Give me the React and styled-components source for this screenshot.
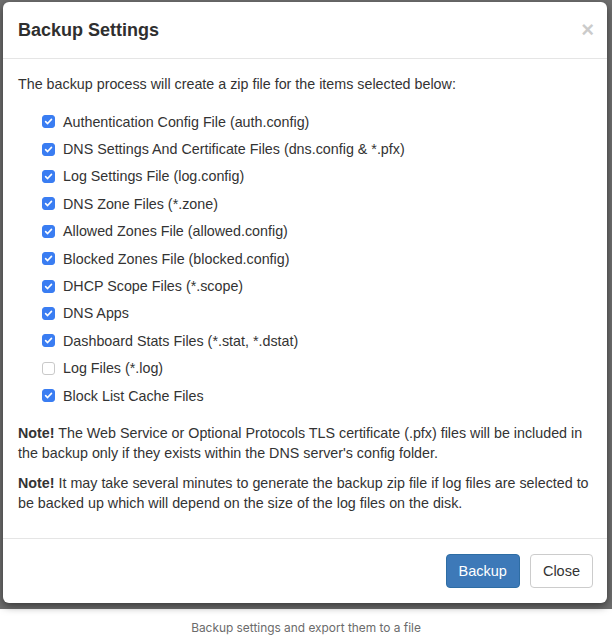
import React, { useState } from 'react'
import styled, { createGlobalStyle } from 'styled-components'

const GlobalStyle = createGlobalStyle`
  body {
    margin: 0;
    background: #fff;
    font-family: "Liberation Sans", Arial, sans-serif;
  }
`

const Backdrop = styled.div`
  height: 609px;
  background: #6f6f6f;
  padding: 2px 5px 6px 3px;
  box-sizing: border-box;
  display: flex;
`

const Modal = styled.div`
  flex: 1;
  background: #fff;
  border-radius: 6px;
  box-shadow: 0 3px 9px rgba(0, 0, 0, 0.5);
  display: flex;
  flex-direction: column;
  color: #333;
`

const Header = styled.div`
  display: flex;
  align-items: center;
  justify-content: space-between;
  padding: 15px;
  border-bottom: 1px solid #e5e5e5;
`

const Title = styled.h4`
  margin: 0;
  font-size: 18px;
  font-weight: 700;
  line-height: 26px;
  color: #2f2f2f;
`

const CloseX = styled.button`
  border: 0;
  background: none;
  padding: 0;
  font-family: "Liberation Sans", Arial, sans-serif;
  font-size: 22px;
  font-weight: 700;
  line-height: 1;
  color: #000;
  opacity: 0.2;
  margin-right: -2px;
  cursor: pointer;
`

const Body = styled.div`
  flex: 1;
  padding: 15px;
  font-size: 14.3px;
  line-height: 20px;
`

const Para = styled.p`
  margin: 0 0 10px;
`

const List = styled.div`
  display: flex;
  flex-direction: column;
  padding: 4px 0 14px 24px;
`

const Row = styled.label`
  display: flex;
  align-items: center;
  gap: 8px;
  height: 27.4px;
  cursor: pointer;
`

const Box = styled.span`
  width: 13px;
  height: 13px;
  box-sizing: border-box;
  border-radius: 3px;
  display: inline-flex;
  align-items: center;
  justify-content: center;
  background: ${({ $on }) => ($on ? '#3a7df2' : '#fff')};
  border: 1px solid ${({ $on }) => ($on ? '#3a7df2' : '#c9c9c9')};
`

const Footer = styled.div`
  display: flex;
  justify-content: flex-end;
  gap: 10px;
  padding: 15px 14px 15px 15px;
  border-top: 1px solid #e5e5e5;
`

const Button = styled.button`
  font-family: "Liberation Sans", Arial, sans-serif;
  font-size: 14.5px;
  line-height: 20px;
  padding: 6px 12px;
  border-radius: 4px;
  border: 1px solid ${({ $primary }) => ($primary ? '#2e6da4' : '#ccc')};
  background: ${({ $primary }) => ($primary ? '#3d79b8' : '#fff')};
  color: ${({ $primary }) => ($primary ? '#fff' : '#333')};
  cursor: pointer;
`

const Caption = styled.div`
  text-align: center;
  font-family: Inter, "Open Sans", sans-serif;
  font-size: 11.9px;
  color: #6b6b6b;
  padding-top: 11px;
`

const items = [
  ['Authentication Config File (auth.config)', true],
  ['DNS Settings And Certificate Files (dns.config & *.pfx)', true],
  ['Log Settings File (log.config)', true],
  ['DNS Zone Files (*.zone)', true],
  ['Allowed Zones File (allowed.config)', true],
  ['Blocked Zones File (blocked.config)', true],
  ['DHCP Scope Files (*.scope)', true],
  ['DNS Apps', true],
  ['Dashboard Stats Files (*.stat, *.dstat)', true],
  ['Log Files (*.log)', false],
  ['Block List Cache Files', true],
]

const Check = ({ on }) => (
  <Box $on={on}>
    {on && (
      <svg width="9" height="9" viewBox="0 0 10 10">
        <path d="M1.8 5.2 L4 7.3 L8.3 2.6" fill="none" stroke="#fff" strokeWidth="1.8" strokeLinecap="round" strokeLinejoin="round" />
      </svg>
    )}
  </Box>
)

const App = () => {
  const [checked, setChecked] = useState(items.map(([, v]) => v))
  const toggle = (i) => setChecked(checked.map((v, j) => (j === i ? !v : v)))

  return (
    <>
      <GlobalStyle />
      <Backdrop>
        <Modal>
          <Header>
            <Title>Backup Settings</Title>
            <CloseX>×</CloseX>
          </Header>
          <Body>
            <Para>The backup process will create a zip file for the items selected below:</Para>
            <List>
              {items.map(([label], i) => (
                <Row key={label} onClick={() => toggle(i)}>
                  <Check on={checked[i]} />
                  {label}
                </Row>
              ))}
            </List>
            <Para>
              <b>Note!</b> The Web Service or Optional Protocols TLS certificate (.pfx) files will be included in the backup only if they exists within the DNS server's config folder.
            </Para>
            <Para>
              <b>Note!</b> It may take several minutes to generate the backup zip file if log files are selected to be backed up which will depend on the size of the log files on the disk.
            </Para>
          </Body>
          <Footer>
            <Button $primary>Backup</Button>
            <Button>Close</Button>
          </Footer>
        </Modal>
      </Backdrop>
      <Caption>Backup settings and export them to a file</Caption>
    </>
  )
}

export default App
